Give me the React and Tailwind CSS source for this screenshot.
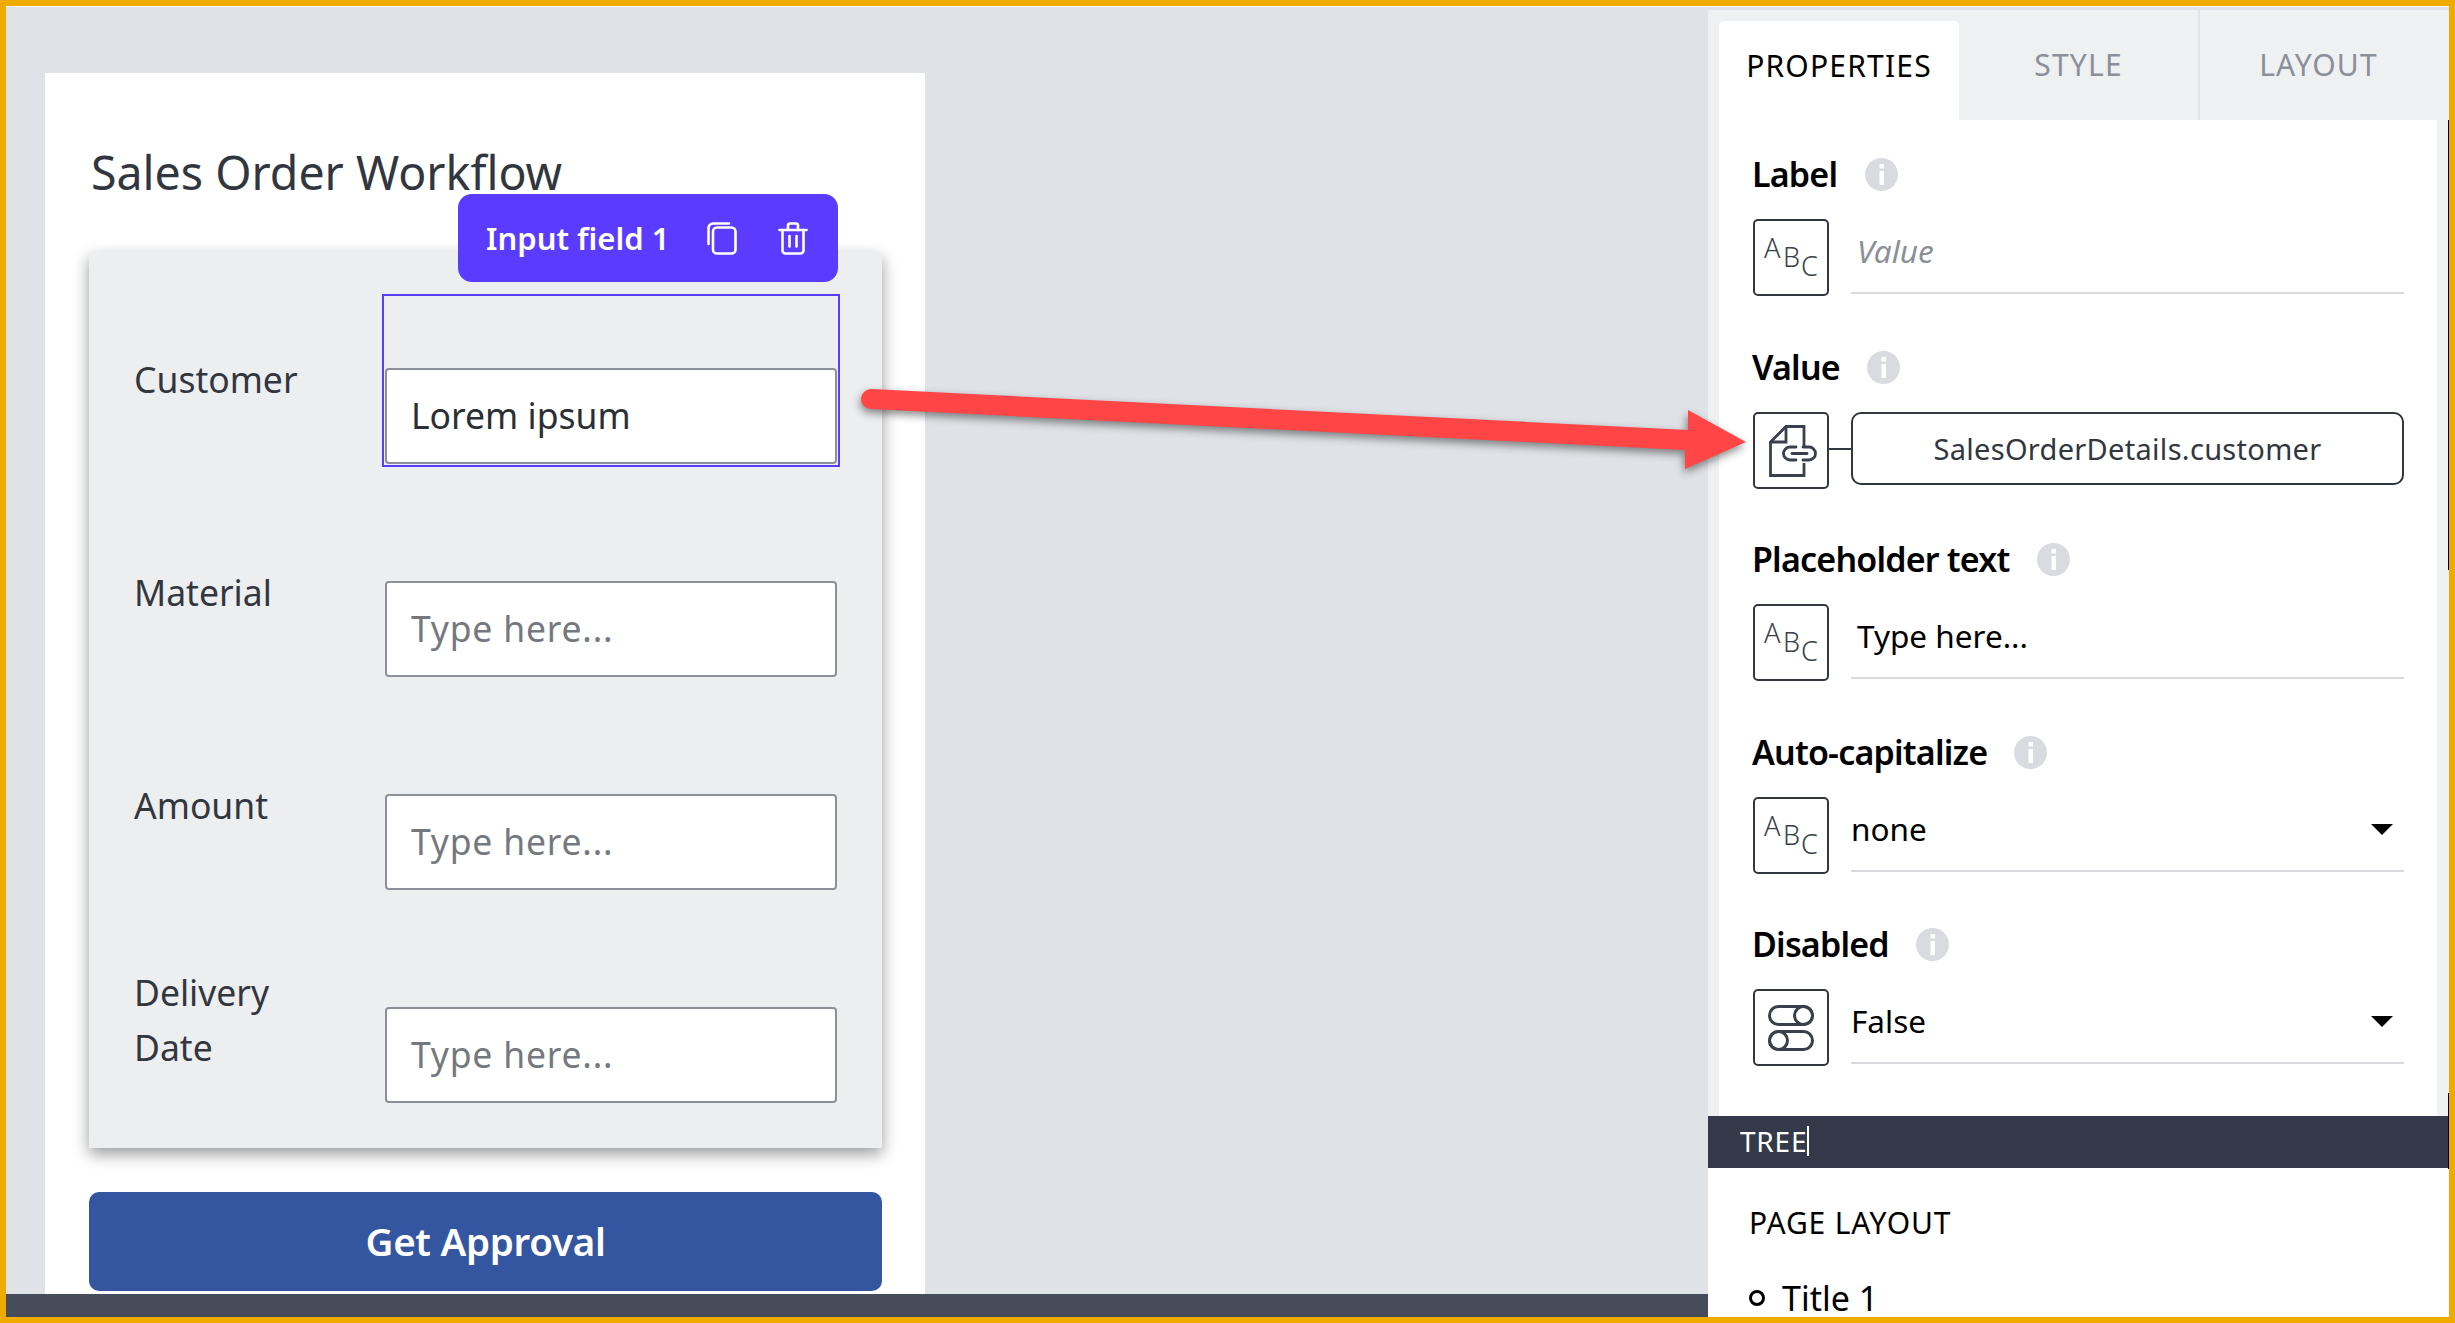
const font = { fontFamily: '"Noto Sans", "Open Sans", sans-serif' };

function Info() {
  return (
    <svg viewBox="0 0 33 33" className="w-[33px] h-[33px] shrink-0">
      <circle cx="16.5" cy="16.5" r="16.5" fill="#d9dbe0" />
      <rect x="14.5" y="6" width="4.5" height="4.5" fill="#fff" />
      <rect x="14.5" y="13" width="4.5" height="14" fill="#fff" />
    </svg>
  );
}

function IconBox({ children }) {
  return (
    <div className="w-[76px] h-[77px] shrink-0 border-[2px] border-[#32363f] rounded-[5px] flex items-center justify-center bg-white">
      {children}
    </div>
  );
}

function Abc() {
  return (
    <div className="relative w-[54px] h-[50px] text-[#3a3f4c] font-light">
      <span className="absolute left-0 top-[-3px] text-[27px] leading-[36px]">A</span>
      <span className="absolute left-[19px] top-[6px] text-[27px] leading-[36px]">B</span>
      <span className="absolute left-[37px] top-[15px] text-[27px] leading-[36px]">C</span>
    </div>
  );
}

function DocLink() {
  return (
    <svg viewBox="0 0 48 52" className="w-[48px] h-[52px] ml-[4px]" fill="none" stroke="#3a3f4c" strokeWidth="2.8">
      <path d="M35 21 V1.5 H17 L1.5 17 V50.5 H35 V38" />
      <path d="M17 1.5 V17 H1.5" />
      <path d="M27 22 H21 a6.5 6.5 0 0 0 0 13 H27" strokeLinecap="round" />
      <path d="M34 22 H40 a6.5 6.5 0 0 1 0 13 H34" strokeLinecap="round" />
      <path d="M23 28.5 H38" strokeLinecap="round" />
    </svg>
  );
}

function Toggle() {
  return (
    <svg viewBox="0 0 46 46" className="w-[46px] h-[46px]" fill="none" stroke="#3a3f4c" strokeWidth="3">
      <rect x="1.5" y="1.5" width="43" height="18" rx="9" />
      <circle cx="35.5" cy="10.5" r="9" />
      <rect x="1.5" y="26.5" width="43" height="18" rx="9" />
      <circle cx="10.5" cy="35.5" r="9" />
    </svg>
  );
}

function Caret() {
  return <div className="w-0 h-0 border-l-[11px] border-r-[11px] border-t-[11px] border-l-transparent border-r-transparent border-t-black" />;
}

function PropLabel({ text, gap }) {
  return (
    <div className="flex items-center h-[40px] pb-[2px]">
      <span className="-ml-[1px] text-[34px] leading-[38px] font-semibold text-black tracking-[-0.8px]">{text}</span>
      <span style={{ marginLeft: gap }}><Info /></span>
    </div>
  );
}

function PropRow({ label, gap, icon, children, mt, underline = true }) {
  return (
    <div style={{ marginTop: mt }}>
      <PropLabel text={label} gap={gap} />
      <div className="flex mt-[24px] items-start">
        <IconBox>{icon}</IconBox>
        {underline ? (
          <div className="ml-[22px] w-[553px] h-[75px] border-b-[2px] border-[#d9dadf] flex items-center justify-between text-[31.5px] pb-[9px]">
            {children}
          </div>
        ) : children}
      </div>
    </div>
  );
}

function FieldRow({ label, offset, selected, placeholder, value }) {
  return (
    <div className="flex h-[96px]">
      <div className="w-[251px] text-[35.5px] leading-[55px] text-[#32363f]" style={{ marginTop: offset }}>
        {label}
      </div>
      <div className="relative w-[452px] h-[96px]">
        <div className="w-full h-full bg-white border-[2px] border-[#8d9099] rounded-[4px] flex items-center pl-[24px] text-[35.5px]">
          {value ? <span className="text-[#2c2f36]">{value}</span> : <span className="text-[#75787f] tracking-[0.8px]">{placeholder}</span>}
        </div>
        {selected && (
          <div className="absolute left-[-3px] right-[-3px] bottom-[-3px] top-[-74px] border-[2px] border-[#5a3bff] pointer-events-none" />
        )}
      </div>
    </div>
  );
}

export default function App() {
  return (
    <div className="relative w-[2455px] h-[1323px] border-[6px] border-[#f0ab00] flex overflow-hidden bg-[#dfe2e6]" style={font}>
      <div className="w-[1702px] h-full flex flex-col">
        <div className="flex-1 min-h-0 border-t-[1px] border-white pl-[39px] pt-[66px] bg-[#dfe2e6]">
          <div className="w-[880px] h-full bg-white pl-[44px] overflow-hidden">
            <div className="pl-[2px] pt-[65px] h-[179px] text-[46.5px] leading-[68px] text-[#32363f]">Sales Order Workflow</div>
            <div className="relative w-[793px] h-[896px] bg-[#edeef0] rounded-t-[3px] shadow-[0_6px_16px_rgba(0,0,0,0.4)] pl-[45px] pt-[116px] flex flex-col gap-[117px]">
              <div className="absolute left-[369px] top-[-58px] w-[380px] h-[88px] rounded-[14px] bg-[#5a3bff] z-10 flex items-center text-white">
                <span className="ml-[28px] text-[31px] font-semibold">Input field 1</span>
                <svg viewBox="0 0 30 33" className="absolute left-[249px] top-[28px] w-[30px] h-[33px]" fill="none" stroke="#fff" strokeWidth="2.6" strokeLinecap="round" strokeLinejoin="round">
                  <rect x="6" y="5.5" width="22.5" height="26" rx="4" />
                  <path d="M1.5 22 V6 a4.5 4.5 0 0 1 4.5 -4.5 H22" />
                </svg>
                <svg viewBox="0 0 30 33" className="absolute left-[320px] top-[28px] w-[30px] h-[33px]" fill="none" stroke="#fff" strokeWidth="2.6" strokeLinecap="round" strokeLinejoin="round">
                  <path d="M1.5 8 H28.5" />
                  <path d="M10 8 V3.5 a2 2 0 0 1 2 -2 H18 a2 2 0 0 1 2 2 V8" />
                  <path d="M4.5 8 V28.5 a3 3 0 0 0 3 3 H22.5 a3 3 0 0 0 3 -3 V8" />
                  <path d="M11.5 14 V24.5 M18.5 14 V24.5" />
                </svg>
              </div>
              <FieldRow label="Customer" offset="-16px" selected value="Lorem ipsum" />
              <FieldRow label="Material" offset="-16px" placeholder="Type here..." />
              <FieldRow label="Amount" offset="-16px" placeholder="Type here..." />
              <FieldRow label={<>Delivery<br />Date</>} offset="-42px" placeholder="Type here..." />
            </div>
            <div className="mt-[44px] w-[793px] h-[99px] rounded-[10px] bg-[#34559f] flex items-center justify-center text-white text-[38.5px] font-semibold tracking-[-0.3px]">
              Get Approval
            </div>
          </div>
        </div>
        <div className="h-[23px] bg-[#464c59] shrink-0" />
      </div>

      <div className="w-[741px] h-full flex flex-col border-t-[1px] border-white shrink-0 relative">
        <div className="flex-1 min-h-0 bg-[#eff0f2] border-t-[3px] border-[#dfe2e6] pl-[11px] pr-[12px] flex flex-col">
          <div className="flex h-[110px] -mr-[12px] shrink-0">
            <div className="w-[240px] mt-[11px] pb-[11px] bg-white rounded-t-[5px] flex items-center justify-center text-[30px] tracking-[1.2px] text-black">PROPERTIES</div>
            <div className="w-[241px] pb-[1px] flex items-center justify-center text-[30px] tracking-[1.2px] text-[#8c8f99] border-r-[2px] border-[#dfe2e6]">STYLE</div>
            <div className="flex-1 flex items-center justify-center text-[30px] tracking-[1.2px] text-[#8c8f99] pb-[1px] pr-[12px]">LAYOUT</div>
          </div>
          <div className="flex-1 bg-white pl-[34px] pt-[35px] overflow-hidden">
            <PropRow label="Label" gap="28px" mt="0" icon={<Abc />}>
              <span className="ml-[6px] italic text-[#8c8f99]">Value</span>
            </PropRow>
            <PropRow label="Value" gap="27px" mt="52px" underline={false} icon={<DocLink />}>
              <div className="flex items-center h-[73px]">
                <div className="w-[22px] h-[2px] bg-[#32363f]" />
                <div className="w-[553px] h-[73px] border-[2px] border-[#32363f] rounded-[10px] flex items-center justify-center text-[29px] tracking-[0.3px] text-[#32363f]">
                  SalesOrderDetails.customer
                </div>
              </div>
            </PropRow>
            <PropRow label="Placeholder text" gap="27px" mt="51px" icon={<Abc />}>
              <span className="ml-[6px] text-black">Type here...</span>
            </PropRow>
            <PropRow label="Auto-capitalize" gap="27px" mt="52px" icon={<Abc />}>
              <span className="text-black">none</span>
              <span className="mr-[11px]"><Caret /></span>
            </PropRow>
            <PropRow label="Disabled" gap="27px" mt="51px" icon={<Toggle />}>
              <span className="text-black">False</span>
              <span className="mr-[11px]"><Caret /></span>
            </PropRow>
          </div>
        </div>
        <div className="h-[52px] bg-[#343a4a] shrink-0 flex items-center pl-[32px] pb-[2px] text-white text-[28px] tracking-[0.8px]">
          <span>TREE</span><span className="w-[1.5px] h-[30px] bg-white" />
        </div>
        <div className="h-[149px] bg-white shrink-0 pl-[41px] overflow-hidden">
          <div className="mt-[35px] text-[30px] leading-[40px] tracking-[0.85px] text-black">PAGE LAYOUT</div>
          <div className="mt-[30px] flex items-center h-[50px]">
            <span className="w-[16px] h-[16px] rounded-full border-[3px] border-black" />
            <span className="ml-[17px] text-[34px] text-black">Title 1</span>
          </div>
        </div>
        <div className="absolute right-0 top-[113px] h-[450px] w-[1px] bg-black" />
        <div className="absolute right-0 top-[1086px] h-[76px] w-[1px] bg-black" />
      </div>

      <svg className="absolute left-[834px] top-[364px] pointer-events-none z-20" width="920" height="120" viewBox="0 0 920 120" style={{ filter: 'drop-shadow(-1px 4px 4px rgba(0,0,0,0.45))' }}>
        <path d="M31 19 L848 60 L848 40 L906 72 L845 99 L845 80 L31 39 A10 10 0 0 1 31 19 Z" fill="#ff4545" />
      </svg>
    </div>
  );
}
